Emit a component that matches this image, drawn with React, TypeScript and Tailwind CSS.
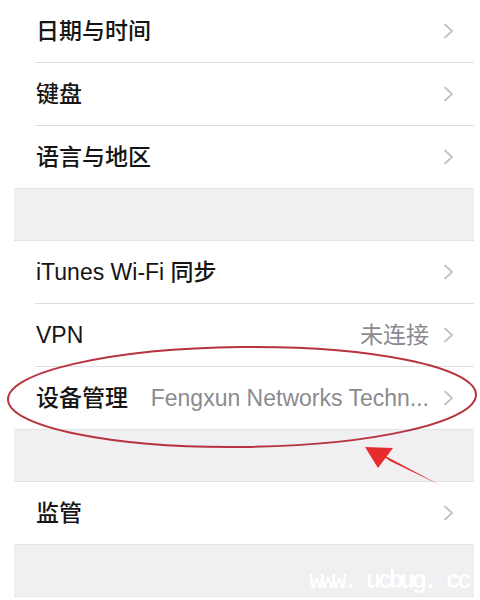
import React from "react";

type Item = { label: string; value?: string };

const groups: Item[][] = [
  [{ label: "日期与时间" }, { label: "键盘" }, { label: "语言与地区" }],
  [
    { label: "iTunes Wi-Fi 同步" },
    { label: "VPN", value: "未连接" },
    { label: "设备管理", value: "Fengxun Networks Techn..." },
  ],
  [{ label: "监管" }],
];

const Chevron = () => (
  <svg width="11" height="16" viewBox="0 0 11 16" className="shrink-0">
    <polyline
      points="2,1.5 9,8 2,14.5"
      fill="none"
      stroke="#c3c3c7"
      strokeWidth="1.8"
      strokeLinecap="round"
      strokeLinejoin="round"
    />
  </svg>
);

const Row = ({ item }: { item: Item }) => (
  <div className="flex items-center h-[62px] pl-[22px] pr-[20px] bg-white">
    <span className="text-[23px] font-medium text-[#151515] whitespace-nowrap">{item.label}</span>
    <span className="flex-1" />
    {item.value && (
      <span className="text-[23px] text-[#8b8b8f] whitespace-nowrap mr-[14px]">{item.value}</span>
    )}
    <Chevron />
  </div>
);

const Gap = () => <div className="h-[53px] bg-[#f0f0f3] border-y border-[#e3e3e6]" />;

export default function App() {
  return (
    <div
      className="relative w-[480px] h-[600px] overflow-hidden bg-white pl-[14px] pr-[6px]"
      style={{ fontFamily: '"Liberation Sans", "Noto Sans CJK SC", sans-serif' }}
    >
      <div className="flex flex-col">
        {groups.map((group, gi) => (
          <div key={gi} className="flex flex-col">
            {group.map((item, i) => (
              <div key={item.label}>
                {i > 0 && <div className="ml-[21px] h-px bg-[#dedee0]" />}
                <Row item={item} />
              </div>
            ))}
            <Gap />
          </div>
        ))}
      </div>

      {/* red marks drawn over the screenshot */}
      <svg className="absolute inset-0 pointer-events-none" width="480" height="600" viewBox="0 0 480 600">
        <ellipse
          cx="242"
          cy="397"
          rx="234"
          ry="50"
          fill="none"
          stroke="#b8333f"
          strokeWidth="2"
          transform="rotate(-0.6 242 397)"
        />
        <polygon points="365,447 393,448 378,468" fill="#e52b2b" />
        <polygon points="376,451 390,461 442,486 438,484" fill="#e52b2b" />
      </svg>

      <div
        className="absolute left-[309px] top-[563px] text-[25px] font-bold tracking-[-3.6px] text-white whitespace-nowrap"
        style={{ fontFamily: '"Liberation Mono", monospace', textShadow: "0 0 1px rgba(0,0,0,0.08)" }}
      >
        www. ucbug. cc
      </div>
    </div>
  );
}
